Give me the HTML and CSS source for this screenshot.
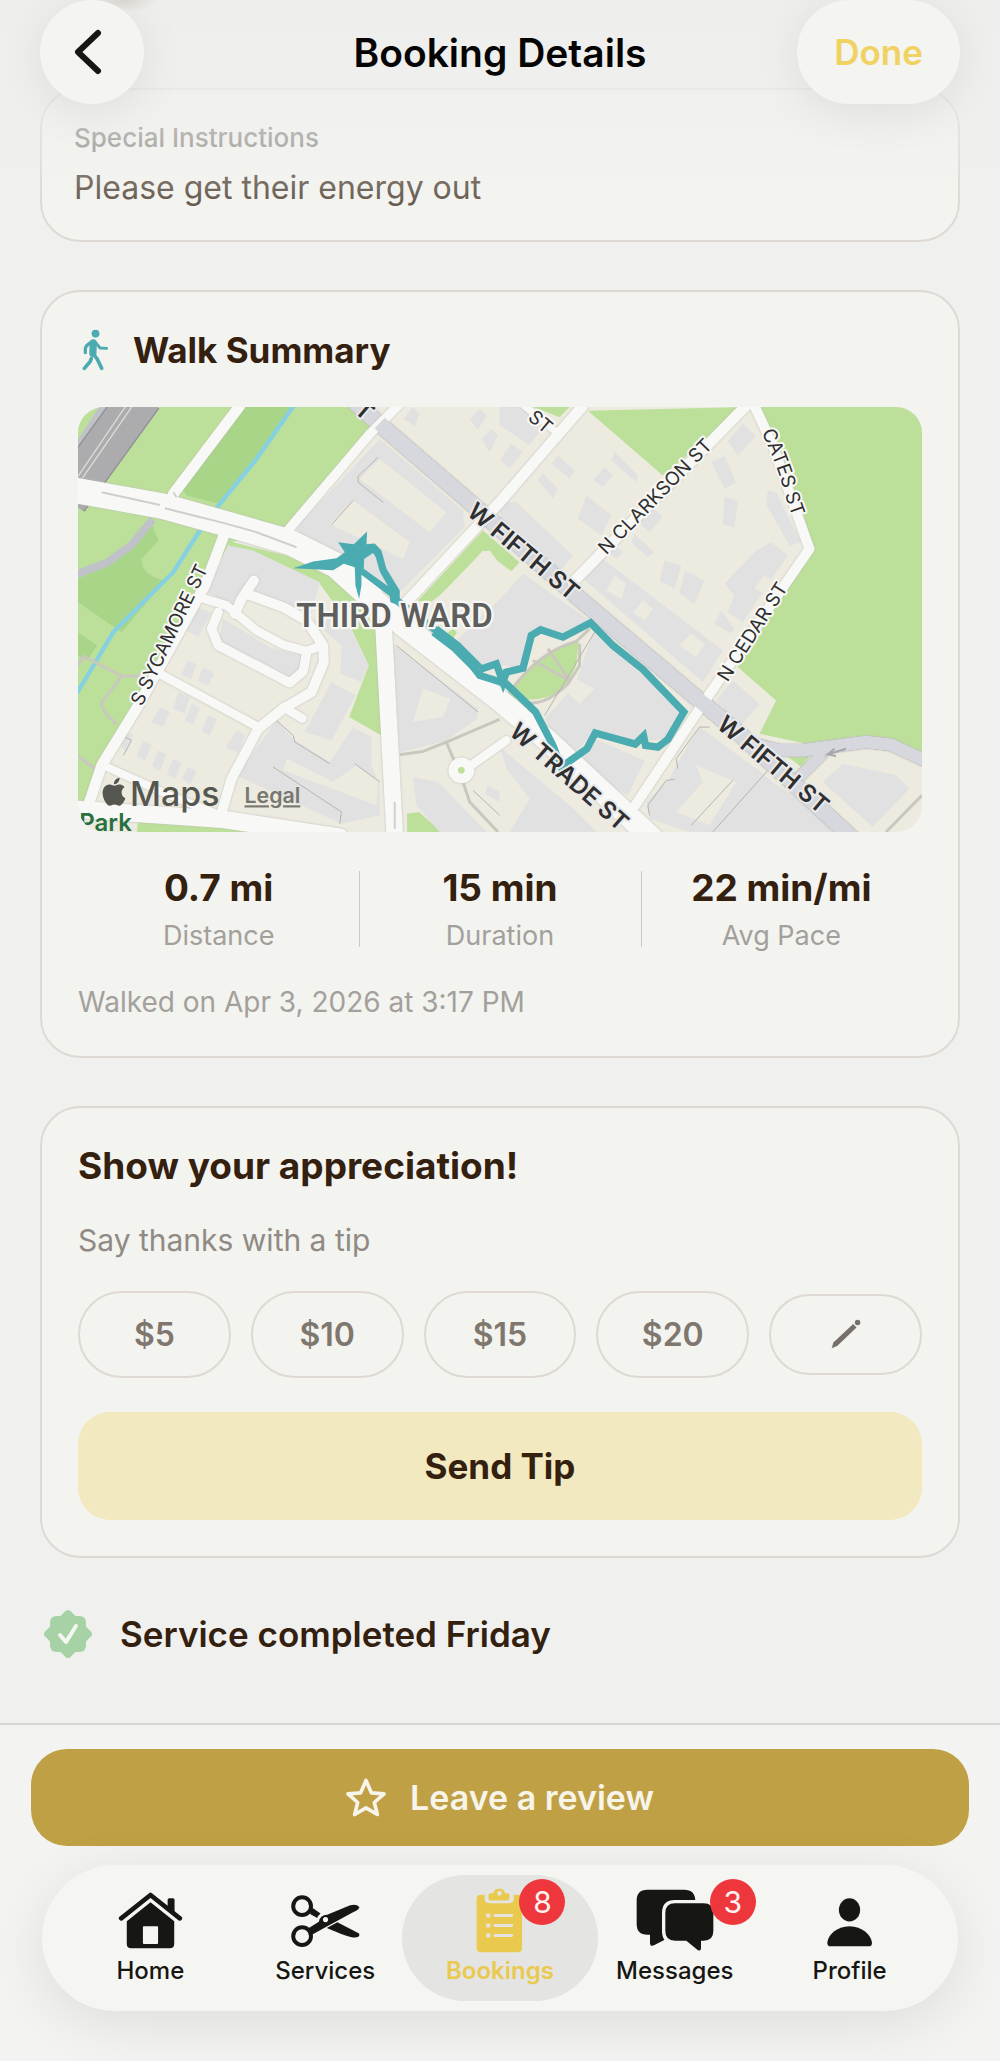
FILE: index.html
```html
<!DOCTYPE html>
<html lang="en">
<head>
<meta charset="utf-8">
<meta name="viewport" content="width=device-width, initial-scale=1">
<title>Booking Details</title>
<link rel="stylesheet" href="styles.css">
</head>
<body>
<header class="topbar">
  <button class="glass back" type="button" aria-label="Back">
    <svg viewBox="0 0 28 46" width="28" height="46" aria-hidden="true"><path d="M24 4 4 23 24 42" fill="none" stroke="#161615" stroke-width="6" stroke-linecap="round" stroke-linejoin="round"/></svg>
  </button>
  <h1 class="topbar-title">Booking Details</h1>
  <button class="glass done" type="button">Done</button>
</header>

<main class="content">
  <section class="card notes">
    <h2 class="notes-label">Special Instructions</h2>
    <p class="notes-text">Please get their energy out</p>
  </section>

  <section class="card walk">
    <h2 class="card-title walk-title">
      <svg class="walk-icon" viewBox="64 58 82 128" width="27" height="42" aria-hidden="true">
        <circle cx="105" cy="72" r="12" fill="#4caab0"/>
        <g fill="none" stroke="#4caab0" stroke-linecap="round" stroke-linejoin="round">
          <path d="M74 130v-12q1-12 22-20" stroke-width="10"/>
          <path d="m104 98 15 18 20 1" stroke-width="9"/>
          <path d="m98 100-1 32" stroke-width="22"/>
          <path d="m98 134 12 15 14 29" stroke-width="11"/>
          <path d="m92 148-3 9-18 21" stroke-width="11"/>
        </g>
      </svg>
      Walk Summary
    </h2>

    <svg class="map" viewBox="24 24 2534 1276" role="img" aria-label="Map of the walked route in Third Ward">
      <defs>
        <g id="streets">
          <path d="M510 20 310 285" stroke-width="32"/>
          <path d="M985 20 900 105 645 405" stroke-width="28"/>
          <path d="M1540 20 1290 310 1010 610" stroke-width="32"/>
          <path d="M1340 0 1455 95" stroke-width="22"/>
          <path d="M475 375 405 560 205 920 95 1100 55 1220" stroke-width="32"/>
          <path d="M2040 10 1510 550" stroke-width="32"/>
          <path d="M2050 10 2110 140 2220 450 1900 915 1680 1245" stroke-width="30"/>
          <path d="M942 690 975 1310" stroke-width="50"/>
          <path d="M395 597 470 620 560 695 640 738 710 757 750 742" stroke-width="26"/>
          <path d="M552 545 515 600 495 645" stroke-width="30"/>
          <path d="M530 585 640 625 710 665 760 740 762 790 725 880 640 930 565 990 485 1140 450 1260" stroke-width="30"/>
          <path d="M445 640 425 690 445 740 660 852 700 818 710 765" stroke-width="28"/>
          <path d="m640 925 58 34" stroke-width="26"/>
          <path d="M260 820 565 985" stroke-width="26"/>
          <path d="M95 1098 300 1190 450 1250" stroke-width="24"/>
          <path d="M20 1232 460 1262 810 1315" stroke-width="52"/>
          <path d="M1190 1110 1310 1025" stroke-width="26"/>
          <circle cx="1175" cy="1115" r="24" stroke-width="30"/>
        </g>
        <g id="avenue">
          <path d="M20 275 280 322 480 378 660 430 800 500 900 590" stroke-width="76"/>
          <path d="M840 540 1000 680 1290 905 1430 1022 1760 1330" stroke-width="66"/>
        </g>
        <g id="fifth">
          <path d="M855 10 940 85 1230 335 1530 600 1890 905 2010 1005 2350 1320" stroke-width="48"/>
          <path d="M2050 1035 2130 1055 2200 1055 2390 1030 2465 1038 2565 1085" stroke-width="38"/>
          <path d="M2260 1065 2190 1135" stroke-width="34"/>
        </g>
        <path id="lane-sycamore" d="M216 925 436 465"/>
        <path id="lane-clarkson" d="M1610 470 1985 88"/>
        <path id="lane-cates" d="M2076 100Q2120 190 2142 270T2202 430"/>
        <path id="lane-cedar" d="M1974 852 2192 512"/>
        <path id="lane-fifth-west" d="M1188 345 1565 660"/>
        <path id="lane-fifth-east" d="M1938 985 2325 1310"/>
        <path id="lane-trade" d="M1315 1005 1700 1345"/>
      </defs>

      <rect class="land" x="24" y="24" width="2534" height="1276"/>

      <g class="park">
        <path d="M24 24H850L920 90 650 400 480 430 410 560 250 820 60 1190 24 1220Z"/>
        <path d="M470 425 650 470 780 530 860 600 925 700 935 1010 838 955 897 800 840 680 750 555 640 500 480 445Z"/>
        <path d="M205 1262 760 1305H200Z M1012 1245 1048 1240 1115 1300H1012Z"/>
        <path d="M1045 605 1240 395 1350 490 1315 528 1260 455 1240 458 1110 590 1080 612Z"/>
        <path d="M1390 24H1500L1470 55Z M1555 35 2030 24 1780 230Z"/>
        <path d="M2060 24H2558V1070L2390 1010 2210 1035 2070 1005 2120 905 2005 805 2225 460Z"/>
        <path d="M2150 1070 2225 1068 2195 1105Z M880 1165 890 1160Z M1130 705l20-15 12 10-12 20Z"/>
        <path d="M1315 890Q1410 750 1527 728L1520 800 1490 860Q1430 920 1315 895Z"/>
      </g>
      <g class="woods">
        <path d="M515 24H672L450 315 350 290Q330 270 355 235Z"/>
        <path d="M24 540 110 500 190 440 245 375 265 425 215 480Q215 530 285 545L155 700 24 610Z"/>
        <path d="M24 700 82 740 50 785 24 770Z"/>
      </g>

      <g class="building">
        <path d="M930 120 1180 335 1185 385 995 575 960 580 700 425 680 385Z"/>
        <path d="M475 440 550 455 750 550 725 645 540 570 500 625 410 580Z"/>
        <path d="M460 660 600 745 695 770 690 815 655 838 445 730Z"/>
        <path d="M730 665 825 655 897 800 875 850 812 825 815 740Z"/>
        <path d="M785 850 858 890 785 1025 705 1000Z"/>
        <path d="M620 965 670 1020 780 1090 850 985 905 1015V1100L930 1160V1250L815 1275 500 1130Z"/>
        <path d="M970 735 1225 930 1222 960 1130 1025 990 1062Z"/>
        <path d="M1360 525 1560 665 1480 720 1410 690 1385 720 1360 815 1310 800 1230 800 1160 725 1290 600Z"/>
        <path d="M1570 700 1840 935 1790 1020 1700 1030 1570 1005 1500 1080 1425 960 1480 900 1520 850Z"/>
        <path d="M1575 1020 1725 1085 1675 1190 1500 1100Z"/>
        <path d="M1290 310 1340 310 1510 470 1460 530 1290 370Z"/>
        <path d="M1530 530 1600 480 1960 755 1900 850Z"/>
        <path d="M2060 455 2105 430 2155 470 2020 670 1975 640 1995 590 1965 555Z"/>
        <path d="M1990 845 2070 915 2010 985 1940 905Z"/>
        <path d="M1890 985 2075 1120 2110 1150 2330 1300H1860L1740 1260 1730 1210 1800 1140 1820 1100Z"/>
        <path d="M2320 1095 2480 1130 2520 1170 2410 1285 2260 1150Z"/>
        <path d="M1290 1045 1500 1220 1580 1300H1320L1380 1200 1310 1110Z"/>
        <path d="M1030 1135 1105 1150 1250 1300H1110L1040 1220Z M1245 1185 1255 1160 1290 1180V1210Z"/>
        <path d="m270 925 30 15-20 45-35-15z m55-45 35 15-15 50-35-15z m40 35 25 12-20 50-25-12z m50 35 25 12-20 48-25-12z m85 45 25 12-18 55-40-15z m-340 5 30 5-20 55-15-15z m60 25 25 12-20 50-25-15z m45 30 25 12-20 50-25-15z m45 25 25 12-20 50-25-15z m45 25 25 12-20 40-25-15z m-1-320 25 12-15 45-30-15z m45 20 35 20-20 35-30-15z M380 625 425 640 385 715 350 695Z"/>
        <path d="m1000 60 30-35 20 20-15 35z m200 0 30-30 22 22-28 40z m35 60 30-30 20 20-25 50z"/>
        <path d="m1290 24 95 0 30 70-35 45-90-60z m35 110 35 25-40 50-30-25z m120 60 20-25 50 45-15 25z m-40 50 15-20 45 45-15 30z m230-85 70 70-5 20-75-65z m-30 45 25 25-30 35-30-20z m-55 85 75 60-30 60-70-50z m190 25 40 40-40 45-35-30z m-130 105 50 40-15 20-50-25z m140-140 50-55 30 20-50 65z m40-60z"/>
        <path d="m1925 190 40-20 35 80-35 20z m40 105 40 10-10 80-35-8z m10-170 45-50 40 35-55 60z m120 150 25 5 75 150-35 10-70-125z m-310 210 50 15-20 70-45-25z m60 30 60 30-30 70-45-30z m110 120 40 55-10 15-50-30z m-260-230 60 55-20 15-50-45z"/>
      </g>
      <g class="land">
        <path d="M930 180 1130 340 1080 400 870 240Z M850 305 1020 430 1000 480 780 375Z"/>
        <path d="M1240 455 1350 535 1290 600 1180 705 1110 595Z"/>
        <path d="M1060 870 1142 900 1120 955 1030 970Z"/>
        <path d="M650 1080 790 1150 860 1100 925 1145 920 1220 640 1115Z"/>
        <path d="M1390 735 1430 720 1500 720 1540 700 1430 760 1320 870 1345 830Z M1410 915 1490 890 1420 960Z"/>
        <path d="m1635 530 35 25-15 45-45-25z m85 75 30 25-25 35-35-25z m145 100 40 30-25 40-50-35z M2085 530l40 30-25 30-45-20z"/>
        <path d="M1880 1100 2000 1150 1920 1280 1820 1240 1900 1150Z M1515 840l60 30-45 45-40-35z"/>
      </g>

      <path class="stream" d="M672 20 560 180 450 315 380 410 310 520 130 700 20 885"/>
      <g class="trail">
        <path d="M24 800 40 772 155 832H220M155 832 95 910Q90 930 140 977M24 1072 75 1110"/>
        <path d="M990 1068 1060 1058 1130 1030 1290 962M1130 1030 1180 1150 1200 1210 1285 1300"/>
        <path d="M1310 895Q1400 760 1520 728L1560 690M1530 735V800L1495 855Q1430 920 1370 912M1435 750 1500 845M1390 785 1500 845"/>
        <path d="M2450 1300 2558 1190"/>
      </g>
      <g class="lot-line">
        <path d="M925 175 865 232V250L940 310M850 305 785 378M620 965 670 1010 675 1030 780 1095M610 1105 815 1240 810 1275M855 1095 930 1150M155 1010 185 1025 160 1070"/>
        <path d="M980 740 1225 940M1210 1175 1290 1250M1575 700 1425 950M1990 1145 1865 1280M2095 1115 1930 1300M1740 1250 1735 1220 1790 1145 1815 1142M1825 1110 1820 1080 1890 985 1920 985"/>
      </g>
      <path class="ramp" d="M20 526 110 492 185 438 248 362"/>
      <g class="highway">
        <path class="ramp" d="M20 150 110 10"/>
        <path class="highway-edge" d="M-10 300 215 -10"/>
        <path class="highway-fill" d="M-10 300 215 -10"/>
        <path class="highway-line" d="M20 238 175 10M20 262 195 10"/>
      </g>

      <use class="street-edge" href="#fifth"/>
      <use class="fifth-edge" href="#fifth"/>
      <use class="fifth-fill" href="#fifth"/>
      <use class="street-edge" href="#streets"/>
      <use class="street-edge" href="#avenue"/>
      <use class="street-fill" href="#streets"/>
      <use class="street-fill" href="#avenue"/>
      <path class="fifth-fill" d="M1870 888 1915 926" stroke-width="44"/>
      <path class="fifth-fill" d="M930 72 960 102" stroke-width="44"/>
      <path class="median" d="M95 280 270 318M285 328 380 352 460 372 560 400 680 445M975 1210v80M310 280l10 15"/>
      <circle class="park" cx="1175" cy="1115" r="10"/>
      <path class="arrow" d="M2330 1050 2278 1066M2295 1050 2275 1067 2300 1072"/>

      <g class="route">
        <path class="route-knot" fill-rule="evenodd" d="M670 508 730 488 800 478 825 460 805 430 852 436 892 398 890 436 915 434 935 455 950 510 990 575V620L962 610 960 592 875 528V560L868 600 857 560 855 505 822 495 790 514ZM883 480 910 462 918 475 930 518 955 562 882 510Z"/>
        <path d="M975 600 1080 680 1170 750 1230 830 1310 855 1398 940 1450 1040 1475 1105 1552 1050 1577 1003 1697 1036 1722 1012 1728 1040 1765 1045 1795 1022 1843 940 1720 812 1630 740 1563 672 1480 715 1413 693 1385 710 1360 808 1310 820 1300 850 1280 795 1230 812"/>
        <path class="route-wide" d="M1095 695 1160 745 1225 810"/>
      </g>

      <g class="street-name">
        <text><textPath href="#lane-sycamore">S SYCAMORE ST</textPath></text>
        <text><textPath href="#lane-clarkson">N CLARKSON ST</textPath></text>
        <text><textPath href="#lane-cates">CATES ST</textPath></text>
        <text><textPath href="#lane-cedar">N CEDAR ST</textPath></text>
        <text transform="translate(1372 60) rotate(40)">ST</text>
      </g>
      <g class="street-name main-street">
        <text><textPath href="#lane-fifth-west">W FIFTH ST</textPath></text>
        <text><textPath href="#lane-fifth-east">W FIFTH ST</textPath></text>
        <text><textPath href="#lane-trade">W TRADE ST</textPath></text>
        <text transform="translate(850 38) rotate(40)">T</text>
      </g>
      <text class="district" x="974" y="684" text-anchor="middle">THIRD WARD</text>
      <text class="park-name" x="28" y="1298">Park</text>
      <g class="map-brand">
        <path transform="translate(90 1137) scale(3.5)" d="M12.152 6.896c-.948 0-2.415-1.078-3.96-1.04-2.04.027-3.91 1.183-4.961 3.014-2.117 3.675-.546 9.103 1.519 12.09 1.013 1.454 2.208 3.09 3.792 3.039 1.52-.065 2.09-.987 3.935-.987 1.831 0 2.35.987 3.96.948 1.637-.026 2.676-1.48 3.676-2.948 1.156-1.688 1.636-3.325 1.662-3.415-.039-.013-3.182-1.221-3.22-4.857-.026-3.04 2.48-4.494 2.597-4.559-1.429-2.09-3.623-2.324-4.39-2.376-2-.156-3.675 1.09-4.61 1.09zM15.53 3.83c.843-1.012 1.4-2.427 1.245-3.83-1.207.052-2.662.805-3.532 1.818-.78.896-1.454 2.338-1.273 3.714 1.338.104 2.715-.688 3.559-1.701"/>
        <text x="180" y="1222">Maps</text>
      </g>
      <a href="#legal"><text class="legal" x="524" y="1214">Legal</text></a>
    </svg>

    <dl class="stats">
      <div class="stat"><dt>Distance</dt><dd>0.7 mi</dd></div>
      <div class="stat"><dt>Duration</dt><dd>15 min</dd></div>
      <div class="stat"><dt>Avg Pace</dt><dd>22 min/mi</dd></div>
    </dl>
    <p class="walked-on">Walked on Apr 3, 2026 at 3:17 PM</p>
  </section>

  <section class="card tip">
    <h2 class="card-title">Show your appreciation!</h2>
    <p class="tip-text">Say thanks with a tip</p>
    <div class="amounts">
      <button class="amount" type="button">$5</button>
      <button class="amount" type="button">$10</button>
      <button class="amount" type="button">$15</button>
      <button class="amount" type="button">$20</button>
      <button class="amount custom" type="button" aria-label="Custom amount">
        <svg viewBox="215 123 88 88" width="30" height="30" aria-hidden="true"><path d="m280 138 10 10-57 54-16 7 5-17z" fill="#77706a"/><circle cx="293" cy="133" r="8" fill="#77706a"/></svg>
      </button>
    </div>
    <button class="send" type="button">Send Tip</button>
  </section>

  <p class="status">
    <svg viewBox="0 0 48 48" width="48" height="48" aria-hidden="true">
      <g fill="#a6d2a5"><rect x="6" y="6" width="36" height="36" rx="6"/><rect x="6" y="6" width="36" height="36" rx="4" transform="rotate(45 24 24)"/></g>
      <path d="m16 25 6 7 10-16" fill="none" stroke="#f4f7f0" stroke-width="4" stroke-linecap="round" stroke-linejoin="round"/>
    </svg>
    Service completed Friday
  </p>
</main>

<footer class="dock">
  <button class="review" type="button">
    <svg viewBox="1043 236 120 116" width="40" height="39" aria-hidden="true"><path d="m1103 243 16 37 38 3-29 26 9 36-34-20-34 20 9-36-29-26 38-3z" fill="none" stroke="#f7f4ea" stroke-width="11" stroke-linejoin="round"/></svg>
    Leave a review
  </button>
  <nav class="tabs" aria-label="Main">
    <a class="tab" href="#home">
      <span class="tab-icon">
        <svg viewBox="352 576 196 176" width="65" height="58" aria-hidden="true">
          <path d="m361 659 89-71 89 71" fill="none" stroke="#161613" stroke-width="14" stroke-linecap="round" stroke-linejoin="round"/>
          <path d="M502 603q0-5 5-5h11q5 0 5 5v38l-21-16z" fill="#161613"/>
          <path fill-rule="evenodd" d="m450 610 72 58v68q0 14-14 14H392q-14 0-14-14v-68zM430 683q-3 0-3 3v48q0 3 3 3h40q3 0 3-3v-48q0-3-3-3z" fill="#161613"/>
        </svg>
      </span>
      Home
    </a>
    <a class="tab" href="#services">
      <span class="tab-icon">
        <svg viewBox="868 576 212 176" width="71" height="58" aria-hidden="true">
          <g fill="none" stroke="#161613" stroke-width="12"><circle cx="903" cy="622" r="27"/><circle cx="903" cy="713" r="27"/></g>
          <path d="m934 627 25 17q-9 7-10 14l-22-12z" fill="#161613"/>
          <path fill-rule="evenodd" d="m921 690 33-21q4-21 25-21l70-29q20-5 28 6-2 8-18 15l-85 46-44 24zM974 655a8 8 0 1 0 .1 0z" fill="#161613"/>
          <path d="m978 688 32-17 66 34q5 13-18 12-15-1-80-29z" fill="#161613"/>
        </svg>
      </span>
      Services
    </a>
    <a class="tab active" href="#bookings" aria-current="page">
      <span class="tab-icon">
        <svg viewBox="110 52 140 196" width="47" height="65" aria-hidden="true">
          <path d="M124 72h11v12q0 14 14 14h60q14 0 14-14V72h13q12 0 12 12v148q0 14-14 14H125q-14 0-14-14V86q0-14 13-14z" fill="#eac94f"/>
          <path fill-rule="evenodd" d="M154 68h7q3-14 18-14t18 14h7q6 0 6 6v8q0 8-8 8h-47q-8 0-8-8v-8q0-6 7-6zM180 61a7 7 0 1 0 .1 0z" fill="#eac94f"/>
          <g stroke="#e4e3dd" stroke-width="9" stroke-linecap="round"><path d="M166 135h51M166 165h51M166 195h51"/></g>
          <g fill="#e4e3dd"><circle cx="146" cy="135" r="7"/><circle cx="146" cy="165" r="7"/><circle cx="146" cy="195" r="7"/></g>
        </svg>
        <span class="badge">8</span>
      </span>
      Bookings
    </a>
    <a class="tab" href="#messages">
      <span class="tab-icon">
        <svg viewBox="412 571 234 186" width="78" height="62" aria-hidden="true">
          <path d="M446 573h110q34 0 34 34v68q0 34-34 34h-30l-60 31q-12 5-12-8v-24h-8q-32 0-32-32v-71q0-32 32-32z" fill="#161613"/>
          <path d="M529 614h86q29 0 29 29v54q0 29-29 29h-8v22q0 11-10 6l-34-28h-34q-29 0-29-29v-54q0-29 29-29z" fill="#161613" stroke="#f5f5f2" stroke-width="20" paint-order="stroke"/>
        </svg>
        <span class="badge">3</span>
      </span>
      Messages
    </a>
    <a class="tab" href="#profile">
      <span class="tab-icon">
        <svg viewBox="978 580 140 160" width="47" height="53" aria-hidden="true">
          <ellipse cx="1048" cy="628" rx="32" ry="35" fill="#161613"/>
          <path d="M981 727c2-24 29-50 67-50s65 26 68 50q0 11-10 11H991q-10 0-10-11z" fill="#161613"/>
        </svg>
      </span>
      Profile
    </a>
  </nav>
</footer>
</body>
</html>
```
FILE: styles.css
```css
* { box-sizing: border-box; }

body {
  margin: 0;
  min-height: 100vh;
  display: flex;
  flex-direction: column;
  background: #f0f0ee;
  color: #33200f;
  font-family: Inter, "Liberation Sans", sans-serif;
}

h1, h2, p, dl, dd { margin: 0; }
button { padding: 0; border: 0; font: inherit; color: inherit; cursor: pointer; }
svg { flex: none; }

/* Header floats over the scrolled content */
.topbar {
  position: absolute;
  inset: 0 0 auto;
  z-index: 2;
  display: grid;
  grid-template-columns: 1fr auto 1fr;
  align-items: start;
  padding: 0 40px 96px;
  background:
    radial-gradient(ellipse 36px 12px at 124px 0, #dcd8d3, transparent),
    linear-gradient(rgba(238, 238, 236, 1), rgba(239, 239, 237, 0.85) 35%, rgba(240, 240, 238, 0));
  pointer-events: none;
}
.topbar-title {
  font-size: 39px;
  line-height: 106px;
  font-weight: 600;
  color: #050505;
}
.glass {
  display: flex;
  align-items: center;
  justify-content: center;
  height: 104px;
  border-radius: 52px;
  background: #f4f4f1;
  box-shadow: 0 8px 48px rgba(0, 0, 0, 0.08);
  pointer-events: auto;
}
.back { width: 104px; padding-right: 8px; }
.done {
  justify-self: end;
  width: 163px;
  font-size: 35px;
  font-weight: 600;
  color: #f0d262;
}

.content {
  flex: 1;
  display: flex;
  flex-direction: column;
  gap: 48px;
  padding: 88px 40px 62px;
}
.card {
  border: 2px solid #dfd9d3;
  border-radius: 40px;
  background: #f3f3f0;
  padding: 36px;
}
.card-title { font-size: 37px; line-height: 44px; font-weight: 700; }

.notes { padding: 32px; display: grid; gap: 14px; }
.notes-label { font-size: 26px; line-height: 32px; font-weight: 500; color: #8c8882; }
.notes-text { font-size: 32px; line-height: 40px; color: #685c51; }

.walk-title { display: flex; align-items: center; gap: 24px; font-size: 35px; }
.walk-icon { margin-left: 4px; }

.map {
  display: block;
  width: 100%;
  margin-top: 35px;
  border-radius: 26px;
}
.land { fill: #edebdf; }
.park { fill: #bce09a; }
.woods { fill: #a8d588; }
.building { fill: #e1e1e1; }
.stream { fill: none; stroke: #86d0e2; stroke-width: 13; }
.trail { fill: none; stroke: #c9c7be; stroke-width: 9; }
.lot-line { fill: none; stroke: #b5b4af; stroke-width: 3; }
.ramp { fill: none; stroke: #bfc2c6; stroke-width: 24; }
.highway-edge { fill: none; stroke: #8f8f94; stroke-width: 132; }
.highway-fill { fill: none; stroke: #acacaf; stroke-width: 124; }
.highway-line { fill: none; stroke: #dcdcd8; stroke-width: 4; }
.street-edge { fill: none; stroke: #d2d1ce; stroke-linecap: round; stroke-linejoin: round; filter: drop-shadow(0 0 3px #bdbcb8); }
.street-fill { fill: none; stroke: #f8f8f7; stroke-linecap: round; stroke-linejoin: round; }
.fifth-edge { fill: none; stroke: #b4b5ba; stroke-linejoin: round; filter: drop-shadow(0 0 2px #8e9097); }
.fifth-fill { fill: none; stroke: #d7d8dd; stroke-linejoin: round; }
.median { fill: none; stroke: #cfcfcc; stroke-width: 6; }
.arrow { fill: none; stroke: #a5a7ad; stroke-width: 6; }
.route { fill: none; stroke: #4aabb1; stroke-width: 22; }
.route-wide { stroke-width: 34; }
.route-knot { fill: #4aabb1; stroke: none; }
.street-name {
  font-size: 57px;
  font-weight: 400;
  fill: #2f2f2f;
  stroke: #f8f8f6;
  stroke-width: 12px;
  stroke-linejoin: round;
  paint-order: stroke;
}
.main-street { font-size: 72px; font-weight: 600; stroke: #e9e9ea; }
.district {
  font-family: Roboto, "Liberation Sans", sans-serif;
  font-size: 99px;
  font-weight: 600;
  fill: #5e5e5c;
  stroke: #f6f6f4;
  stroke-width: 14px;
  stroke-linejoin: round;
  paint-order: stroke;
}
.park-name { font-size: 72px; font-weight: 600; fill: #28703f; }
.map-brand { fill: #555650; font-size: 102px; font-weight: 500; }
.legal { font-size: 64px; font-weight: 600; fill: #77776f; text-decoration: underline; }

.stats { display: flex; margin-top: 34px; }
.stat {
  position: relative;
  flex: 1;
  display: flex;
  flex-direction: column-reverse;
  gap: 9px;
  text-align: center;
}
.stat + .stat::before {
  content: "";
  position: absolute;
  inset: 5px auto 6px 0;
  width: 1px;
  background: #cbc9c5;
}
.stat dd { font-size: 37px; line-height: 44px; font-weight: 700; }
.stat dt { font-size: 27px; line-height: 34px; color: #a3a09b; }
.walked-on { margin-top: 31px; font-size: 28px; line-height: 36px; color: #a3a09b; }

.tip-text { margin-top: 34px; font-size: 30px; line-height: 36px; color: #8f8a84; }
.amounts {
  display: grid;
  grid-template-columns: repeat(5, 1fr);
  align-items: center;
  gap: 20px;
  margin-top: 33px;
}
.amount {
  display: flex;
  align-items: center;
  justify-content: center;
  height: 87px;
  border: 2px solid #dfd9d3;
  border-radius: 44px;
  background: transparent;
  font-size: 32px;
  font-weight: 600;
  color: #7f776e;
}
.custom { height: 81px; }
.send {
  display: block;
  width: 100%;
  height: 108px;
  margin-top: 34px;
  border-radius: 32px;
  background: #f2e9c0;
  font-size: 35px;
  font-weight: 700;
}

.status {
  display: flex;
  align-items: center;
  gap: 28px;
  padding: 4px 4px 0;
  font-size: 35px;
  line-height: 44px;
  font-weight: 600;
}

.dock {
  display: flex;
  flex-direction: column;
  gap: 19px;
  padding: 24px 31px 50px;
  border-top: 2px solid #d6d6d3;
  background: #f3f3f1;
}
.review {
  display: flex;
  align-items: center;
  justify-content: center;
  gap: 24px;
  height: 97px;
  border-radius: 36px;
  background: #c0a044;
  color: #f7f4ea;
  font-size: 34px;
  font-weight: 600;
}
.tabs {
  display: grid;
  grid-template-columns: repeat(5, 1fr);
  height: 146px;
  margin: 0 11px;
  padding: 10px 21px;
  border-radius: 73px;
  background: #f5f5f2;
  box-shadow: 0 12px 56px rgba(0, 0, 0, 0.09);
}
.tab {
  position: relative;
  display: flex;
  flex-direction: column;
  align-items: center;
  color: #161613;
  font-size: 24px;
  line-height: 32px;
  font-weight: 500;
  text-decoration: none;
}
.tab > * { z-index: 1; }
.tab-icon {
  position: relative;
  display: flex;
  align-items: center;
  justify-content: center;
  height: 80px;
  padding-top: 10px;
}
.active { z-index: 0; color: #eac94f; font-weight: 600; }
.active::before {
  content: "";
  position: absolute;
  inset: 0 -11px;
  z-index: -1;
  border-radius: 64px;
  background: #e4e4e2;
}
.badge {
  position: absolute;
  top: 4px;
  right: -42px;
  width: 46px;
  height: 46px;
  border-radius: 50%;
  background: #ee373d;
  color: #fdf3f2;
  font-size: 30px;
  line-height: 46px;
  font-weight: 400;
  text-align: center;
}
```
